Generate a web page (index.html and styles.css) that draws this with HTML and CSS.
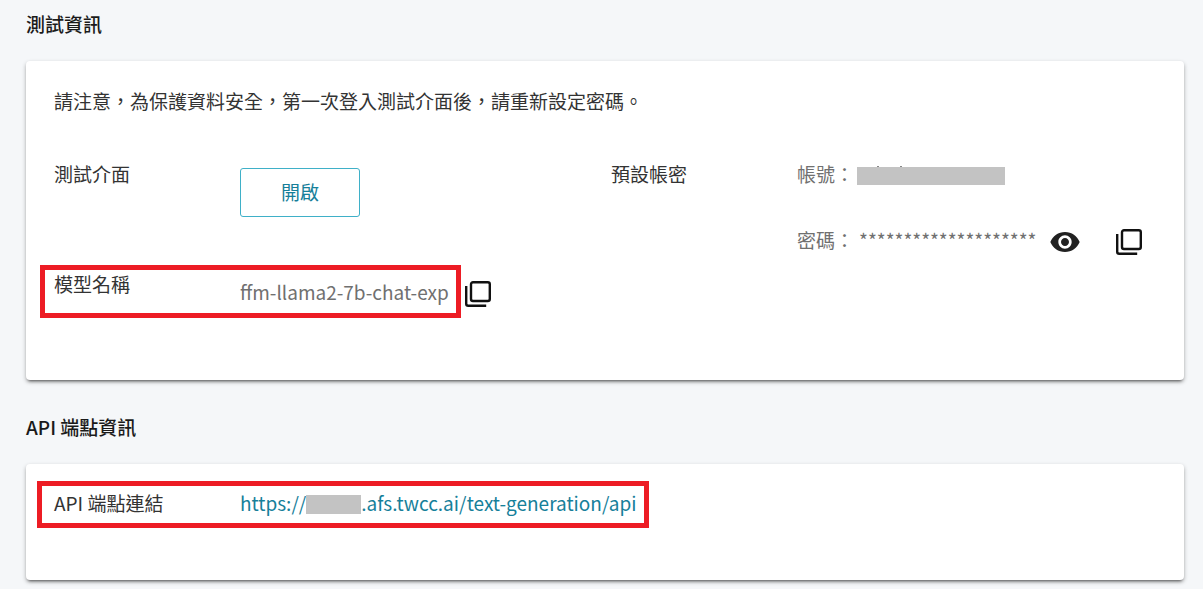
FILE: index.html
```html
<!DOCTYPE html>
<html lang="zh-Hant">
<head>
  <meta charset="UTF-8">
  <meta name="viewport" content="width=device-width, initial-scale=1.0">
  <title>測試資訊</title>
  <link rel="stylesheet" href="styles.css">
</head>
<body>
  <main>
    <section>
      <h2>測試資訊</h2>
      <div class="card test-card">
        <p class="notice">請注意，為保護資料安全，第一次登入測試介面後，請重新設定密碼。</p>

        <div class="columns">
          <div class="column">
            <div class="field open-field">
              <span class="label">測試介面</span>
              <button type="button" class="open-button">開啟</button>
            </div>
            <div class="model-row">
              <div class="field marked">
                <span class="label">模型名稱</span>
                <span class="value model-name">ffm-llama2-7b-chat-exp</span>
              </div>
              <button type="button" class="icon-button" aria-label="複製模型名稱">
                <svg width="26" height="26" viewBox="0 0 26 26" fill="none" stroke="#111" stroke-width="2.4">
                  <rect x="6" y="1.2" width="18.8" height="18.8" rx="2"/>
                  <path d="M1.2 5v17.8a2 2 0 0 0 2 2h18"/>
                </svg>
              </button>
            </div>
          </div>

          <div class="column">
            <div class="field">
              <span class="label">預設帳密</span>
              <div class="value account">
                <div class="account-row">
                  <span>帳號：</span>
                  <svg class="account-mask" width="148" height="19" viewBox="0 0 148 19">
                    <path d="M0 1h148v18H0z" fill="#c3c3c3"/>
                    <path d="M20 0h2v1h-2zM43 0h2v1h-2z" fill="#888"/>
                  </svg>
                </div>
                <div class="account-row">
                  <span>密碼：</span>
                  <span class="password">********************</span>
                  <button type="button" class="icon-button" aria-label="顯示密碼">
                    <svg width="32" height="32" viewBox="0 0 24 24" fill="#212121">
                      <path d="M12 4.5C7 4.5 2.73 7.61 1 12c1.73 4.39 6 7.5 11 7.5s9.27-3.11 11-7.5c-1.73-4.39-6-7.5-11-7.5zM12 17c-2.76 0-5-2.24-5-5s2.24-5 5-5 5 2.24 5 5-2.24 5-5 5zm0-8c-1.66 0-3 1.34-3 3s1.34 3 3 3 3-1.34 3-3-1.34-3-3-3z"/>
                    </svg>
                  </button>
                  <button type="button" class="icon-button copy-password" aria-label="複製密碼">
                    <svg width="26" height="26" viewBox="0 0 26 26" fill="none" stroke="#111" stroke-width="2.4">
                      <rect x="6" y="1.2" width="18.8" height="18.8" rx="2"/>
                      <path d="M1.2 5v17.8a2 2 0 0 0 2 2h18"/>
                    </svg>
                  </button>
                </div>
              </div>
            </div>
          </div>
        </div>
      </div>
    </section>

    <section>
      <h2>API 端點資訊</h2>
      <div class="card api-card">
        <div class="field marked marked-api">
          <span class="label">API 端點連結</span>
          <a href="#" class="api-link">https://<span class="host-mask"></span>.afs.twcc.ai/text-generation/api</a>
        </div>
      </div>
    </section>
  </main>
</body>
</html>
```

FILE: styles.css
```css
body {
  margin: 0;
  background-color: #f5f7f9;
  color: #333;
  font-family: "Noto Sans CJK TC", sans-serif;
  font-size: 19px;
  font-weight: 400;
  line-height: 28px;
}

main {
  padding: 10px 19px 9px 26px;
}

h2 {
  margin: 0 0 23px;
  color: #1a1a1a;
  font-size: 19px;
  font-weight: 500;
}

section + section {
  margin-top: 33px;
}

.card {
  box-sizing: border-box;
  padding-left: 28px;
  padding-right: 16px;
  background-color: #fff;
  border-radius: 4px;
  box-shadow: 0 3px 3px -2px rgba(0, 0, 0, 0.5), 0 2px 4px rgba(0, 0, 0, 0.3);
}

.test-card {
  padding-top: 26px;
  padding-bottom: 62px;
}

.api-card {
  padding-top: 17px;
  padding-bottom: 52px;
}

.notice {
  margin: 0 0 45px;
}

.columns {
  display: grid;
  grid-template-columns: 1fr 1fr;
}

.field {
  display: flex;
  align-items: flex-start;
}

.label {
  flex: none;
  width: 186px;
}

.value {
  color: #707070;
}

.open-field {
  margin-bottom: 48px;
}

.open-button {
  width: 120px;
  height: 49px;
  margin-top: 8px;
  padding: 0 0 2px;
  border: 1px solid #3fb0c8;
  border-radius: 3px;
  background-color: #fff;
  color: #16809a;
  font: inherit;
  cursor: pointer;
}

.icon-button {
  display: flex;
  padding: 0;
  border: none;
  background: none;
  cursor: pointer;
}

.model-row {
  display: flex;
  align-items: center;
  gap: 4px;
}

.model-row .icon-button {
  padding-top: 4px;
}

/* red frame round a label and its value */
.marked {
  width: fit-content;
  margin-left: -14px;
  padding: 0 7px 7px 9px;
  border: 5px solid #ed1c24;
}

.model-name {
  padding-top: 8px;
}

.marked-api {
  margin-left: -17px;
  padding: 3px 7px 6px 12px;
}

.account-row {
  display: flex;
  align-items: center;
  height: 28px;
}

.account-row + .account-row {
  margin-top: 38px;
}

.account-row .icon-button {
  padding-top: 4px;
}

.account-mask {
  margin-top: 2px;
  margin-left: 3px;
}

.password {
  margin-left: 5px;
}

.password + .icon-button {
  margin-left: 13px;
}

.copy-password {
  margin-left: 35px;
}

.api-link {
  color: #16809a;
  text-decoration: none;
}

.host-mask {
  display: inline-block;
  width: 55px;
  height: 19px;
  background-color: #c3c3c3;
  vertical-align: -3px;
}
```
